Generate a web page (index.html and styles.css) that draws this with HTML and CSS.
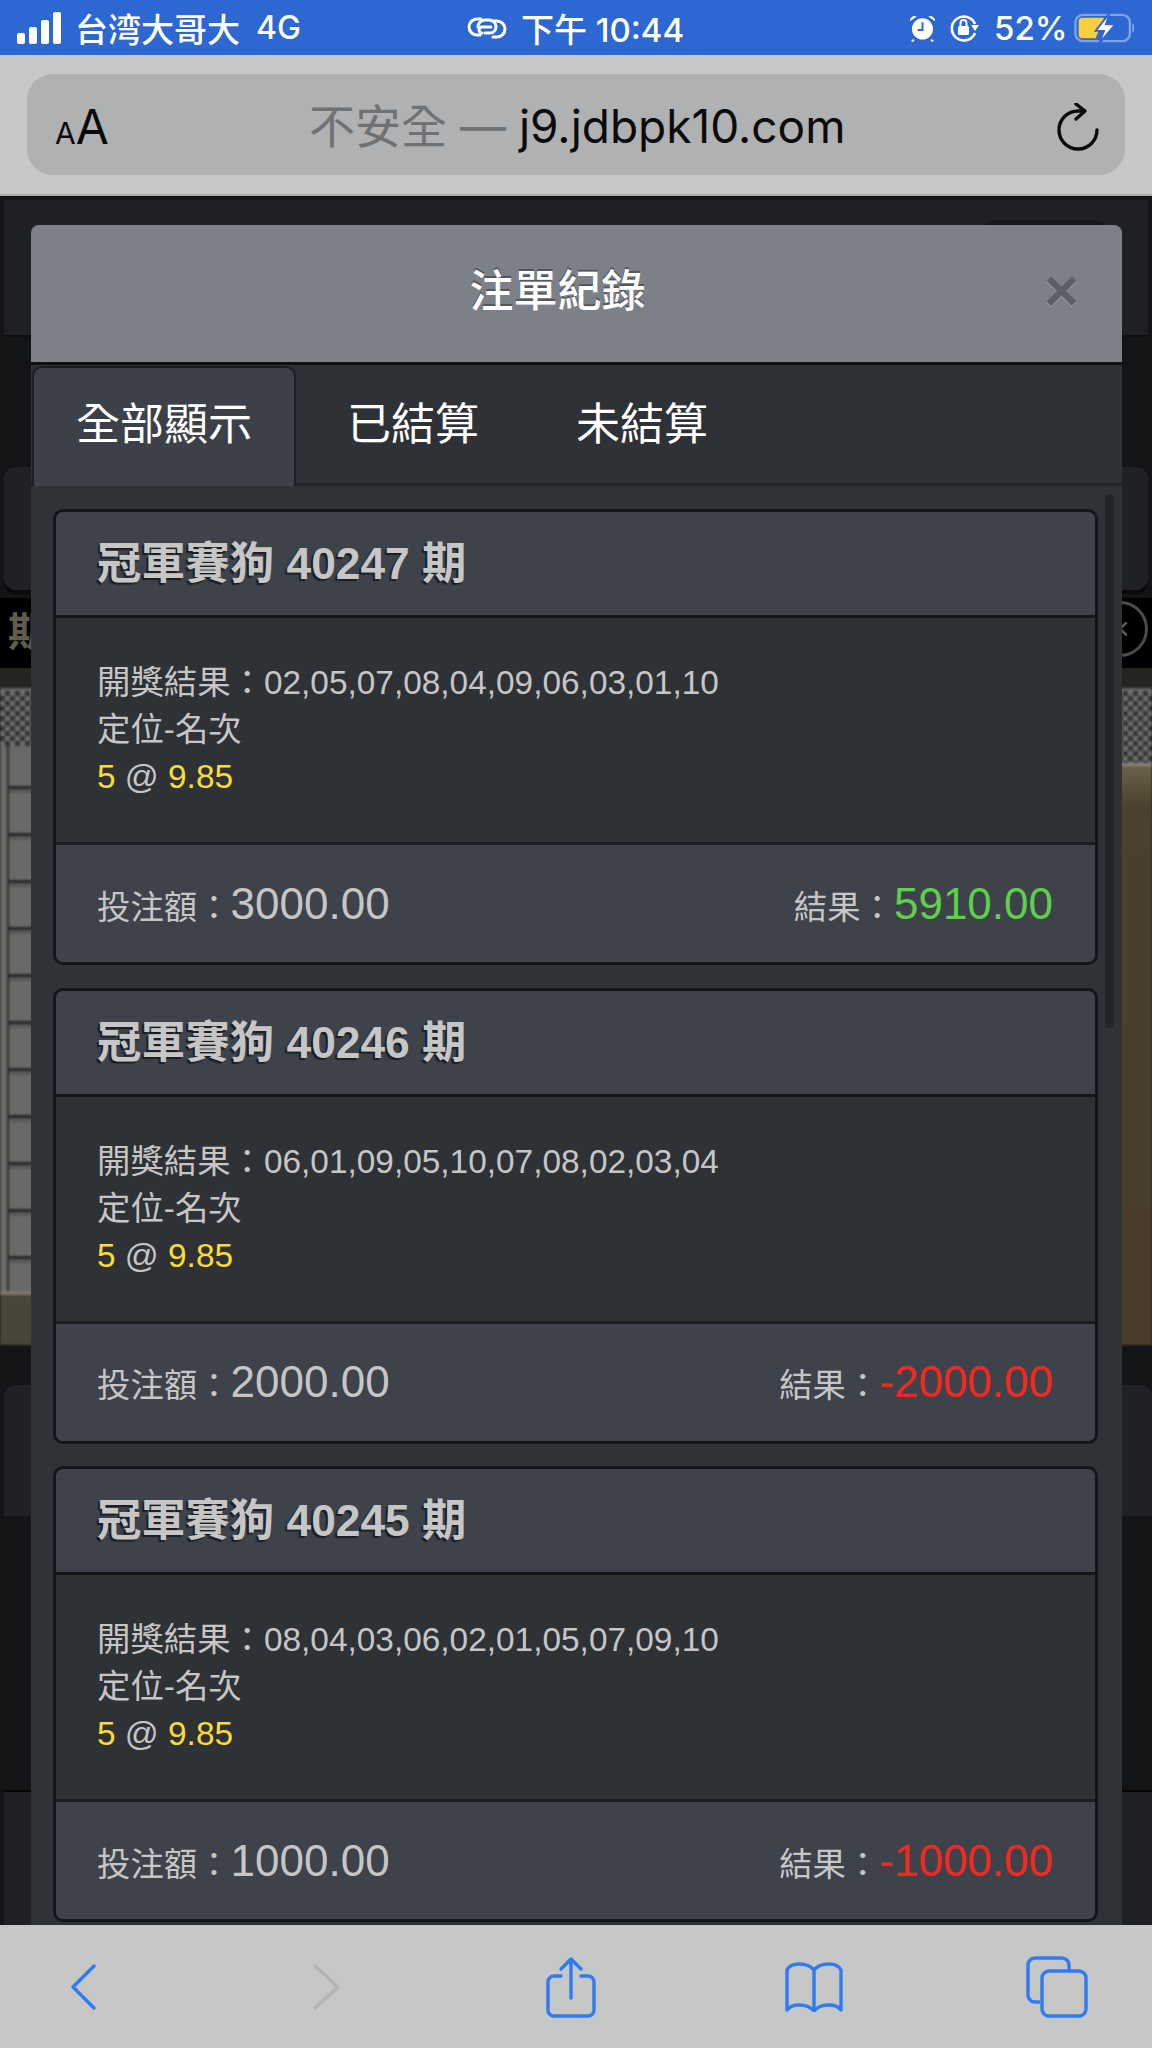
FILE: index.html
```html
<!DOCTYPE html>
<html lang="zh-Hant">
<head>
  <meta charset="UTF-8">
  <meta name="viewport" content="width=device-width, initial-scale=1.0">
  <title>注單紀錄</title>
  <link rel="stylesheet" href="styles.css">
</head>
<body>
  <div class="status-bar">
    <div class="status-left">
      <div class="signal"><i></i><i></i><i></i><i></i></div>
      <span>台湾大哥大</span>
      <span class="net">4G</span>
    </div>
    <div class="status-center">
      <svg class="link-icon" viewBox="0 0 40 26" fill="none" stroke="#fff" stroke-width="3" stroke-linecap="round">
        <path d="M14 4H10a8 8 0 0 0 0 16h3"/>
        <path d="M26 22h4a8 8 0 0 0 0-16h-3"/>
        <path d="M11 12a7 7 0 0 1 7-7h4a7 7 0 0 1 7 7 6 6 0 0 1-6 6h-5"/>
        <path d="M15 18a3 3 0 0 1 0-6h9"/>
      </svg>
      <span>下午 10:44</span>
    </div>
    <div class="status-right">
      <svg class="alarm" viewBox="0 0 28 30">
        <circle cx="14" cy="16" r="11" fill="#fff"/>
        <path d="M1 8a5 5 0 0 1 7-5zM27 8a5 5 0 0 0-7-5z" fill="#fff"/>
        <path d="M5 27l-2 2M23 27l2 2" stroke="#fff" stroke-width="2"/>
        <path d="M14 9v8H9" fill="none" stroke="#2d67d2" stroke-width="2"/>
      </svg>
      <svg class="lock-rot" viewBox="0 0 30 28" fill="none">
        <path d="M25 10A12 12 0 1 0 25 19" stroke="#fff" stroke-width="2.6"/>
        <path d="M21 11h8l-4 6z" fill="#fff"/>
        <rect x="8" y="12" width="11" height="9" rx="1.5" fill="#fff"/>
        <path d="M10.500 12V9a3 3 0 0 1 6 0v3" stroke="#fff" stroke-width="2"/>
      </svg>
      <span>52%</span>
      <svg class="battery" viewBox="0 0 66 34">
        <rect x="1.500" y="3" width="58" height="28" rx="8" fill="none" stroke="#7fa3e4" stroke-width="2.500"/>
        <path d="M62 12c3 1 3 9 0 10z" fill="#7fa3e4"/>
        <path d="M9 6h23l-9 22H9a4 4 0 0 1-4-4V10a4 4 0 0 1 4-4z" fill="#f9cf3b"/>
        <path d="M38 1L23 20h9l-5 13 17-20h-10z" fill="#fff" stroke="#2d67d2" stroke-width="2"/>
      </svg>
    </div>
  </div>

  <div class="url-bar">
    <div class="url-pill">
      <div class="aa"><small>A</small>A</div>
      <div class="address"><span class="insecure">不安全 — </span>j9.jdbpk10.com</div>
      <svg class="reload" viewBox="0 0 46 48" fill="none" stroke="#0b0b0b" stroke-width="3.400" stroke-linecap="round" stroke-linejoin="round">
        <path d="M41 27a19 19 0 1 1-19-19h6"/>
        <path d="M20 1l9 7-9 8"/>
      </svg>
    </div>
  </div>

  <div class="page">
    <div class="backdrop">
      <div class="bg-nav"><div class="bg-tab"></div></div>
      <div class="bg-gap"><div class="bg-panel"></div></div>
      <div class="bg-strip">
        <span class="bg-qi">期</span>
        <span class="bg-close">×</span>
      </div>
      <div class="bg-band"></div>
      <div class="bg-game">
        <div class="bg-side">
          <div class="grate"></div>
          <div class="gates"></div>
          <div class="sand"></div>
        </div>
        <div class="bg-side">
          <div class="grate grate-tall"></div>
          <div class="dirt"></div>
        </div>
      </div>
      <div class="bg-lower"><div class="bg-panel bg-panel-low"></div></div>
      <div class="bg-foot"></div>
    </div>

    <div class="modal">
      <div class="modal-header">
        <h1 class="modal-title">注單紀錄</h1>
        <span class="modal-close">×</span>
      </div>
      <div class="tabs">
        <a class="tab active">全部顯示</a>
        <a class="tab">已結算</a>
        <a class="tab">未結算</a>
      </div>
      <div class="modal-body">
        <div class="scroll-thumb"></div>

        <div class="card">
          <div class="card-head">冠軍賽狗 40247 期</div>
          <div class="card-body">
            <div>開獎結果：02,05,07,08,04,09,06,03,01,10</div>
            <div>定位-名次</div>
            <div><span class="pick">5</span> @ <span class="pick">9.85</span></div>
          </div>
          <div class="card-foot">
            <div>投注額：<span class="amount">3000.00</span></div>
            <div>結果：<span class="amount win">5910.00</span></div>
          </div>
        </div>

        <div class="card">
          <div class="card-head">冠軍賽狗 40246 期</div>
          <div class="card-body">
            <div>開獎結果：06,01,09,05,10,07,08,02,03,04</div>
            <div>定位-名次</div>
            <div><span class="pick">5</span> @ <span class="pick">9.85</span></div>
          </div>
          <div class="card-foot">
            <div>投注額：<span class="amount">2000.00</span></div>
            <div>結果：<span class="amount lose">-2000.00</span></div>
          </div>
        </div>

        <div class="card">
          <div class="card-head">冠軍賽狗 40245 期</div>
          <div class="card-body">
            <div>開獎結果：08,04,03,06,02,01,05,07,09,10</div>
            <div>定位-名次</div>
            <div><span class="pick">5</span> @ <span class="pick">9.85</span></div>
          </div>
          <div class="card-foot">
            <div>投注額：<span class="amount">1000.00</span></div>
            <div>結果：<span class="amount lose">-1000.00</span></div>
          </div>
        </div>
      </div>
    </div>
  </div>

  <div class="toolbar">
    <div class="tool">
      <svg width="32" height="46" viewBox="0 0 32 46" fill="none" stroke="#2f7bf2" stroke-width="3.400" stroke-linecap="round" stroke-linejoin="round"><path d="M26 2L5 23l21 21"/></svg>
    </div>
    <div class="tool">
      <svg width="32" height="46" viewBox="0 0 32 46" fill="none" stroke="#b2b3b3" stroke-width="3.400" stroke-linecap="round" stroke-linejoin="round"><path d="M4 2l23 21L4 44"/></svg>
    </div>
    <div class="tool">
      <svg width="50" height="62" viewBox="0 0 50 62" fill="none" stroke="#2f7bf2" stroke-width="3.400" stroke-linecap="round" stroke-linejoin="round">
        <path d="M15 20H8a6 6 0 0 0-6 6v28a6 6 0 0 0 6 6h34a6 6 0 0 0 6-6V26a6 6 0 0 0-6-6h-7"/>
        <path d="M25 42V3M15 13L25 3l10 10"/>
      </svg>
    </div>
    <div class="tool">
      <svg width="58" height="50" viewBox="0 0 58 50" fill="none" stroke="#2f7bf2" stroke-width="3.400" stroke-linejoin="round">
        <path d="M29 8C25 3 20 2 14 2 8 2 4 4 2 8v40c3-4 7-5 12-5s11 1 15 6c4-5 10-6 15-6s9 1 12 5V8c-2-4-6-6-12-6-6 0-11 1-15 6z"/>
        <path d="M29 8v41"/>
      </svg>
    </div>
    <div class="tool">
      <svg width="62" height="62" viewBox="0 0 62 62" fill="none" stroke="#2f7bf2" stroke-width="3.400">
        <path d="M14 46H9a7 7 0 0 1-7-7V9a7 7 0 0 1 7-7h27a7 7 0 0 1 7 7v6"/>
        <rect x="16" y="15" width="44" height="45" rx="7"/>
      </svg>
    </div>
  </div>
</body>
</html>
```

FILE: styles.css
```css
* {
  box-sizing: border-box;
}
body, html {
  margin: 0;
  padding: 0;
  background: #131416;
}
body {
  width: 1152px;
  height: 2048px;
  display: flex;
  flex-direction: column;
  overflow: hidden;
  font-family: "Liberation Sans", "Noto Sans CJK TC", sans-serif;
}

/* phone chrome */
.status-bar {
  height: 55px;
  flex: none;
  background: #2d67d2;
  color: #fff;
  display: flex;
  align-items: center;
  padding: 0 0 0 17px;
  font-family: Inter, "Noto Sans CJK SC", sans-serif;
  font-size: 33px;
  font-weight: 500;
}
.status-left {
  width: 450px;
  display: flex;
  align-items: center;
  gap: 12px;
}
.net {
  margin-left: 4px;
  font-size: 32px;
}
.signal {
  display: flex;
  align-items: flex-end;
  gap: 4px;
  height: 32px;
  margin-right: 2px;
}
.signal i {
  width: 8px;
  background: #fff;
  border-radius: 2px;
}
.signal i:nth-child(1) { height: 11px; }
.signal i:nth-child(2) { height: 17px; }
.signal i:nth-child(3) { height: 24px; }
.signal i:nth-child(4) { height: 32px; }
.status-center {
  width: 442px;
  display: flex;
  align-items: center;
  gap: 14px;
}
.link-icon {
  width: 40px;
  height: 26px;
}
.status-right {
  display: flex;
  align-items: center;
  gap: 14px;
}
.alarm {
  width: 27px;
  height: 30px;
}
.lock-rot {
  width: 30px;
  height: 28px;
}
.status-right span {
  margin-left: 0;
}
.battery {
  width: 62px;
  height: 34px;
  margin-left: -8px;
}

.url-bar {
  height: 141px;
  flex: none;
  background: #c6c7c9;
  padding: 19px 27px 0;
  border-bottom: 2px solid #a9aaac;
}
.url-pill {
  height: 101px;
  background: #b0b1b3;
  border-radius: 26px;
  display: flex;
  align-items: center;
  padding: 0 23px 0 28px;
  font-family: Inter, "Noto Sans CJK TC", sans-serif;
  color: #0b0b0b;
}
.aa {
  font-size: 48px;
  width: 254px;
  line-height: 1;
  padding-top: 4px;
}
.aa small {
  font-size: 30px;
}
.address {
  flex: 1;
  font-size: 46px;
  padding-bottom: 4px;
}
.insecure {
  color: #707173;
}
.reload {
  width: 46px;
  height: 48px;
  margin-top: 4px;
}

/* page behind the modal */
.page {
  flex: 1;
  position: relative;
  overflow: hidden;
}
.backdrop {
  display: flex;
  flex-direction: column;
  height: 100%;
}
.bg-nav {
  height: 137px;
  margin: 4px 4px 0;
  background: #1e2024;
  border-bottom: 2px solid #0d0e0f;
  display: flex;
  justify-content: flex-end;
  padding: 20px 41px 0 0;
}
.bg-tab {
  width: 123px;
  height: 30px;
  background: #16171a;
  border-radius: 10px 10px 0 0;
}
.bg-gap {
  height: 261px;
  background: #131416;
  padding-top: 130px;
}
.bg-panel {
  height: 123px;
  margin: 0 4px;
  background: #1f2124;
  border-radius: 12px;
  box-shadow: 0 4px 0 #0a0a0b;
}
.bg-strip {
  height: 70px;
  background: #000;
  display: flex;
  justify-content: space-between;
  align-items: center;
  padding: 0 4px 8px 8px;
}
.bg-qi {
  font-size: 40px;
  font-weight: bold;
  color: #5f5d4e;
}
.bg-close {
  width: 56px;
  height: 56px;
  border: 3px solid #4b4b4b;
  border-radius: 50%;
  color: #5b5b5b;
  font-size: 34px;
  line-height: 48px;
  text-align: center;
}
.bg-band {
  height: 20px;
  background: #26241f;
}
.bg-game {
  height: 657px;
  display: flex;
  justify-content: space-between;
  background: #222;
  filter: blur(1px);
}
.bg-side {
  width: 34px;
  display: flex;
  flex-direction: column;
}
.grate {
  height: 58px;
  border-top: 3px solid #6a6a6a;
  background: repeating-conic-gradient(#333 0% 25%, #6e6e6e 0% 50%) 0 0 / 10px 10px;
}
.grate-tall {
  height: 78px;
  border-bottom: 3px solid #85857b;
}
.gates {
  height: 545px;
  border-left: 7px solid #6a6b67;
  background: repeating-linear-gradient(#686a68 0 40px, #262727 40px 43px, #585958 43px 47px);
  box-shadow: inset 2px 0 0 #2c2c2c;
}
.sand {
  flex: 1;
  background: linear-gradient(#7a766a 0 4px, #4a453a 4px);
}
.dirt {
  flex: 1;
  background: linear-gradient(#6d624a, #4b412d 40px, #4a3e2a);
}
.bg-lower {
  flex: 1;
  background: #131416;
  padding-top: 40px;
}
.bg-panel-low {
  height: 131px;
  background: #1f2124;
  border-radius: 12px 12px 0 0;
  box-shadow: none;
  margin: 0 0 0 4px;
}
.bg-foot {
  height: 135px;
  background: #1e2024;
  border-top: 2px solid #050505;
  margin-left: 4px;
}

/* modal */
.modal {
  position: absolute;
  top: 29px;
  left: 31px;
  width: 1091px;
  height: 1710px;
  background: #2f3338;
  border-radius: 8px 8px 0 0;
  display: flex;
  flex-direction: column;
}
.modal-header {
  height: 140px;
  flex: none;
  display: flex;
  align-items: center;
  padding: 0 46px 11px 40px;
  background: #7c8088;
  border-radius: 8px 8px 0 0;
  border-bottom: 3px solid #0e0f10;
}
.modal-title {
  flex: 1;
  margin: 0;
  text-align: center;
  font-size: 44px;
  font-weight: 500;
  color: #fff;
  text-shadow: 0 -2px 0 #54575d;
}
.modal-close {
  width: 32px;
  margin-top: 5px;
  text-align: center;
  font-size: 60px;
  font-weight: bold;
  line-height: 1;
  color: #5c5f66;
  text-shadow: 0 1px 0 #a4a7ac;
}
.tabs {
  height: 121px;
  flex: none;
  display: flex;
  background: #2e3136;
  border-bottom: 3px solid #212327;
  padding: 1px 0 0 1px;
}
.tab {
  margin-right: 5px;
  padding: 0 44px;
  font-size: 44px;
  line-height: 114px;
  color: #fff;
  border: 2px solid transparent;
  border-bottom: 0;
}
.tab.active {
  background: #3c4048;
  border-color: #1b1d20;
  border-radius: 10px 10px 0 0;
  height: 120px;
  padding: 0 42px;
}
.modal-body {
  flex: 1;
  position: relative;
  padding: 23px 24px 0 22px;
  background: #2f3338;
}
.scroll-thumb {
  position: absolute;
  top: 8px;
  right: 8px;
  width: 9px;
  height: 534px;
  background: #22252a;
  border-radius: 5px;
}

/* result cards */
.card {
  height: 456px;
  margin-bottom: 22.700px;
  border: 3px solid #131518;
  border-radius: 10px;
  display: flex;
  flex-direction: column;
  overflow: hidden;
  color: #c6c6c6;
}
.card-head {
  height: 106px;
  flex: none;
  padding: 0 42px 0 41px;
  background: #3e424b;
  border-bottom: 3px solid #131518;
  font-size: 44.300px;
  font-weight: bold;
  line-height: 103px;
  text-shadow: -2px 2px 1px #1c1e22;
}
.card-body {
  flex: 1;
  padding: 41px 42px 0 41px;
  background: #2e3136;
  font-size: 33.400px;
  line-height: 47px;
}
.pick {
  color: #fbdc33;
}
.card-foot {
  height: 120px;
  flex: none;
  display: flex;
  justify-content: space-between;
  align-items: center;
  padding: 0 42px 0 41px;
  background: #3e424b;
  border-top: 3px solid #1a1c20;
  font-size: 33.400px;
}
.amount {
  font-size: 44px;
}
.win {
  color: #5fd04a;
}
.lose {
  color: #f5281e;
}

/* safari toolbar */
.toolbar {
  height: 123px;
  flex: none;
  background: #c6c8c8;
  display: flex;
  align-items: center;
  justify-content: space-between;
  padding: 0 46px 0 35px;
  position: relative;
  z-index: 2;
}
.tool {
  width: 98px;
  display: flex;
  justify-content: center;
}
```
